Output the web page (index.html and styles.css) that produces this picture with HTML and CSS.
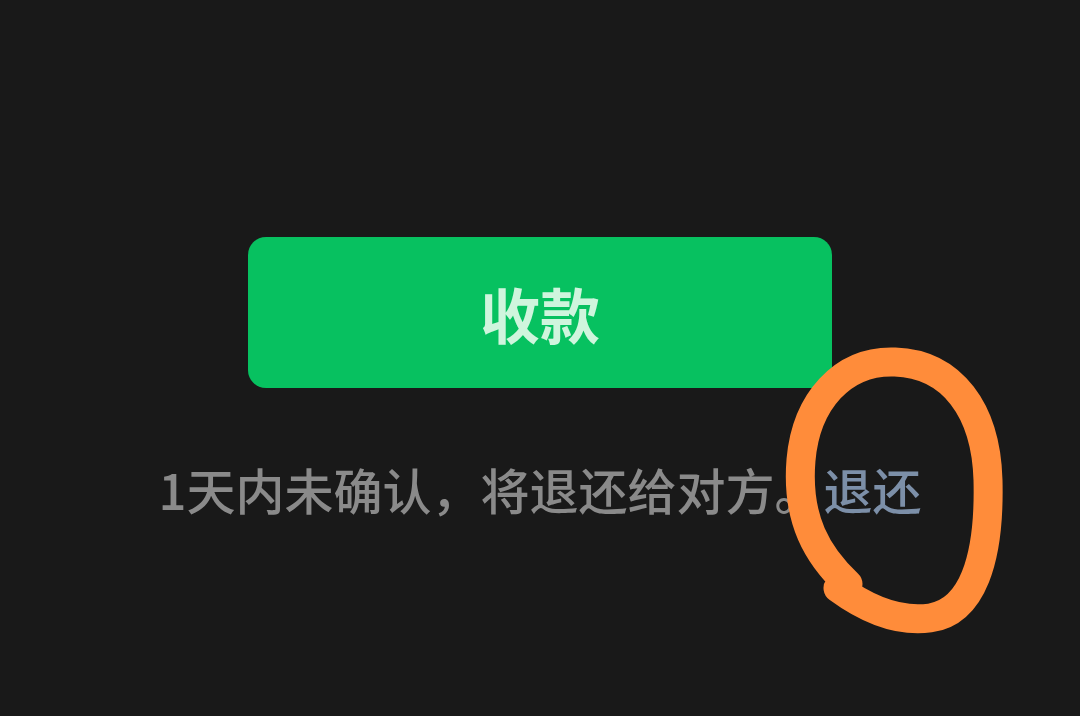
FILE: index.html
```html
<!DOCTYPE html>
<html lang="zh-CN">
<head>
<meta charset="utf-8">
<link rel="stylesheet" href="styles.css">
</head>
<body>
<main class="page">
  <button class="accept">收款</button>
  <p class="note">1天内未确认，将退还给对方。<span class="link">退还</span></p>
</main>
<svg class="mark" width="1080" height="716" viewBox="0 0 1080 716">
  <path d="M 838 588 C 868 610 900 622 930 618 C 972 612 990 560 988 480 C 986 410 952 364 895 362 C 842 360 806 402 801 460 C 796 520 818 556 848 584" fill="none" stroke="#FF8C3A" stroke-width="29" stroke-linecap="round" stroke-linejoin="round"/>
</svg>
</body>
</html>
```
FILE: styles.css
```css
html, body {
  margin: 0;
  padding: 0;
  background: #191919;
  width: 1080px;
  height: 716px;
  overflow: hidden;
}
.page {
  display: flex;
  flex-direction: column;
  align-items: center;
  padding-top: 237px;
  font-family: "Noto Sans CJK SC", "Noto Sans", sans-serif;
}
.accept {
  width: 584px;
  height: 151px;
  border: none;
  border-radius: 18px;
  background: #07C160;
  color: #CFF5DD;
  font-family: "Noto Sans CJK SC", "Noto Sans", sans-serif;
  font-weight: 700;
  font-size: 60px;
  line-height: 1;
  padding: 0;
}
.note {
  margin: 76px 0 0;
  font-size: 49px;
  font-weight: 500;
  line-height: 1;
  color: #8A8A8A;
  white-space: nowrap;
}
.link {
  color: #7C8FA8;
}
.mark {
  position: absolute;
  left: 0;
  top: 0;
  pointer-events: none;
}
```
